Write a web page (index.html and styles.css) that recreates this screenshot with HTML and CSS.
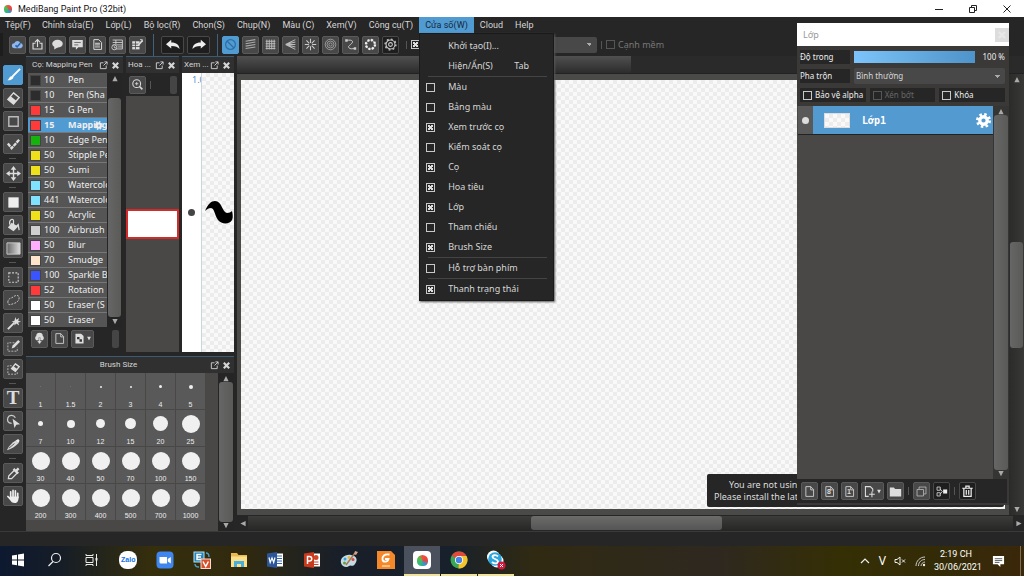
FILE: index.html
```html
<!DOCTYPE html>
<html lang="vi">
<head>
  <meta charset="utf-8">
  <title>MediBang Paint Pro (32bit)</title>
  <link rel="stylesheet" href="styles.css">
</head>
<body>

<svg class="sprite" aria-hidden="true">
  <symbol id="popout" viewBox="0 0 10 10"><path d="M5 2H1.500V8.500H8V5M5 5l4-4M6 1h3v3" fill="none" stroke="currentColor"/></symbol>
  <symbol id="close" viewBox="0 0 10 10"><path d="M2 2l6 6M8 2l-6 6" stroke="currentColor" stroke-width="2.400"/></symbol>
  <symbol id="up" viewBox="0 0 8 8"><path d="M4 1l3 6H1z" fill="currentColor"/></symbol>
  <symbol id="down" viewBox="0 0 8 8"><path d="M4 7l3-6H1z" fill="currentColor"/></symbol>
  <symbol id="left" viewBox="0 0 8 8"><path d="M1 4l6-3v6z" fill="currentColor"/></symbol>
  <symbol id="right" viewBox="0 0 8 8"><path d="M7 4l-6-3v6z" fill="currentColor"/></symbol>
  <symbol id="page" viewBox="0 0 16 16"><path d="M3.500 2h6l3.500 3.500V14h-9.500zM9.500 2v4H13" fill="none" stroke="currentColor"/></symbol>
  <symbol id="gear" viewBox="0 0 16 16"><circle cx="8" cy="8" r="4" fill="none" stroke="currentColor" stroke-width="3.500"/><circle cx="8" cy="8" r="6.500" fill="none" stroke="currentColor" stroke-width="3" stroke-dasharray="2.600 2.500"/></symbol>
</svg>

<header class="titlebar">
  <span class="logo"></span>
  <h1>MediBang Paint Pro (32bit)</h1>
  <div class="window-buttons">
    <button type="button" aria-label="Minimize"><svg viewBox="0 0 10 10"><path d="M1 5.500h8" stroke="#222"/></svg></button>
    <button type="button" aria-label="Restore"><svg viewBox="0 0 10 10"><path d="M1.500 3.500h5v5h-5zM3.500 3.500v-2h5v5h-2" fill="none" stroke="#222"/></svg></button>
    <button type="button" aria-label="Close"><svg viewBox="0 0 10 10"><path d="M1.500 1.500l7 7M8.500 1.500l-7 7" stroke="#222"/></svg></button>
  </div>
</header>

<nav class="menubar">
  <button type="button">Tệp(F)</button>
  <button type="button">Chỉnh sửa(E)</button>
  <button type="button">Lớp(L)</button>
  <button type="button">Bộ lọc(R)</button>
  <button type="button">Chọn(S)</button>
  <button type="button">Chụp(N)</button>
  <button type="button">Màu (C)</button>
  <button type="button">Xem(V)</button>
  <button type="button">Công cụ(T)</button>
  <div class="menu-open">
    <button type="button" class="active">Cửa số(W)</button>
    <div class="dropdown">
      <button type="button" class="item">Khởi tạo(I)...</button>
      <button type="button" class="item">Hiện/Ẩn(S)<kbd>Tab</kbd></button>
      <hr>
      <label class="item"><input type="checkbox">Màu</label>
      <label class="item"><input type="checkbox">Bảng màu</label>
      <label class="item"><input type="checkbox" checked>Xem trước cọ</label>
      <label class="item"><input type="checkbox">Kiểm soát cọ</label>
      <label class="item"><input type="checkbox" checked>Cọ</label>
      <label class="item"><input type="checkbox" checked>Hoa tiêu</label>
      <label class="item"><input type="checkbox" checked>Lớp</label>
      <label class="item"><input type="checkbox">Tham chiếu</label>
      <label class="item"><input type="checkbox" checked>Brush Size</label>
      <hr>
      <label class="item"><input type="checkbox">Hỗ trợ bàn phím</label>
      <hr>
      <label class="item"><input type="checkbox" checked>Thanh trạng thái</label>
    </div>
  </div>
  <button type="button">Cloud</button>
  <button type="button">Help</button>
</nav>

<div class="toolbar">
  <div class="group">
    <button type="button" class="btn" aria-label="Cloud"><svg viewBox="0 0 16 16"><path d="M4 12.500a3 3 0 0 1 0-6 4 4 0 0 1 7.500-.500 3.300 3.300 0 0 1 .500 6.500z" fill="#8fb8ee"/><path d="M5.500 9l2 2 4-4.500" fill="none" stroke="#2f62a8" stroke-width="2"/></svg></button>
    <button type="button" class="btn" aria-label="Export"><svg viewBox="0 0 16 16"><path d="M5.500 6.500h-3v7h11v-7h-3M8 11V2M5 5l3-3 3 3" fill="none" stroke="#ddd" stroke-width="1.400"/></svg></button>
    <button type="button" class="btn" aria-label="Comment"><svg viewBox="0 0 16 16"><ellipse cx="8" cy="7" rx="6.500" ry="4.800" fill="#ddd"/><path d="M4 10l0 4 5-3z" fill="#ddd"/></svg></button>
    <button type="button" class="btn" aria-label="Message"><svg viewBox="0 0 16 16"><path d="M1.500 2.500h13v9H9l-3 3v-3H1.500z" fill="#ddd"/><path d="M4 5.500h8M4 8.500h5" stroke="#555"/></svg></button>
    <button type="button" class="btn" aria-label="Document"><svg viewBox="0 0 16 16"><path d="M3.500 2h6l3.500 3.500V14h-9.500zM5 6.500h6M5 8.500h6M5 11h6" fill="none" stroke="#ddd" stroke-width="1.200"/></svg></button>
    <button type="button" class="btn" aria-label="History"><svg viewBox="0 0 16 16"><path d="M2 2.500h12v11H6M2 5.500h12M2 8.500h12M6 2.500v5M8 11h6" fill="none" stroke="#ddd"/><circle cx="4" cy="11.500" r="3" fill="#444" stroke="#ddd"/><path d="M4 10v2h2" fill="none" stroke="#ddd"/></svg></button>
    <button type="button" class="btn" aria-label="Edit grid"><svg viewBox="0 0 16 16"><path d="M1.500 4h9v10h-9z" fill="#ddd"/><path d="M1 7.500h10M1 10.500h10M5.500 4v10" stroke="#444"/><path d="M9 9l5-6" stroke="#ddd" stroke-width="2" /><path d="M11 2h3v3" fill="none" stroke="#ddd"/></svg></button>
  </div>
  <i class="bar"></i>
  <div class="group wide">
    <button type="button" class="btn dark" aria-label="Undo"><svg viewBox="0 0 16 16"><path d="M0 7l6-5v3c6 0 9 2.500 9.500 7.500-2-2.500-4.500-3.500-9.500-3.500v3z" fill="#eee"/></svg></button>
    <button type="button" class="btn dark" aria-label="Redo"><svg viewBox="0 0 16 16"><path d="M16 7l-6-5v3C4 5 1 7.500.500 12.500 2.500 10 5 9 10 9v3z" fill="#eee"/></svg></button>
  </div>
  <i class="bar"></i>
  <div class="group">
    <button type="button" class="btn on" aria-label="Snap off"><svg viewBox="0 0 16 16"><circle cx="8" cy="8" r="6" fill="none" stroke="#2b6fa5" stroke-width="1.500"/><path d="M4 4l8 8" stroke="#2b6fa5" stroke-width="1.500"/></svg></button>
    <button type="button" class="btn" aria-label="Parallel snap"><svg viewBox="0 0 16 16"><path d="M2 4l12-2M2 7l12-2M2 10l12-2M2 13l12-2" stroke="#aaa" stroke-width="1.300"/></svg></button>
    <button type="button" class="btn" aria-label="Grid snap"><svg viewBox="0 0 16 16"><path d="M3.500 2v12M6.500 2v12M9.500 2v12M12.500 2v12M2 4h12M2 7h12M2 10h12M2 13h12" stroke="#bbb" stroke-width="1.200"/></svg></button>
    <button type="button" class="btn" aria-label="Vanishing snap"><svg viewBox="0 0 16 16"><path d="M2 8l12-6M2 8l12-3M2 8h12M2 8l12 3M2 8l12 6" stroke="#bbb" stroke-width="1.300"/></svg></button>
    <button type="button" class="btn" aria-label="Radial snap"><svg viewBox="0 0 16 16"><path d="M8 1v5M8 10v5M1 8h5M10 8h5M3 3l3.500 3.500M9.500 9.500L13 13M13 3L9.500 6.500M6.500 9.500L3 13" stroke="#ccc" stroke-width="1.300"/></svg></button>
    <button type="button" class="btn" aria-label="Circle snap"><svg viewBox="0 0 16 16"><g fill="none" stroke="#aaa"><circle cx="8" cy="8" r="6.500"/><circle cx="8" cy="8" r="4.300"/><circle cx="8" cy="8" r="2"/></g></svg></button>
    <button type="button" class="btn" aria-label="Curve snap"><svg viewBox="0 0 16 16"><path d="M3 3c5-1 9 0 7 3s-6 4-4 6 4 1 7 1" fill="none" stroke="#ccc" stroke-width="1.200"/><path d="M1.500 1.500h3v3h-3zM12 11.500h3v3h-3z" fill="#ccc"/></svg></button>
    <button type="button" class="btn" aria-label="Ellipse snap"><svg viewBox="0 0 16 16"><circle cx="8" cy="8" r="5.500" fill="none" stroke="#ddd"/><circle cx="8" cy="8" r="5.500" fill="none" stroke="#eee" stroke-width="3" stroke-dasharray="2.300 2.020"/></svg></button>
    <button type="button" class="btn dark" aria-label="Snap settings"><svg viewBox="0 0 16 16"><g fill="none" stroke="#ccc"><circle cx="8" cy="8" r="5.500" stroke-width="1.300"/><circle cx="8" cy="8" r="2.300" stroke-width="1.300"/><circle cx="8" cy="8" r="6.700" stroke-dasharray="2.300 2.900" stroke-width="1.600"/></g></svg></button>
  </div>
  <i class="bar short"></i>
  <input type="checkbox" checked aria-label="AntiAliasing">
  <select class="combo" aria-label="Correction"><option></option></select>
  <i class="bar short"></i>
  <label class="soft"><input type="checkbox" disabled>Cạnh mềm</label>
</div>

<main class="workspace">
  <aside class="tools">
    <button type="button" class="btn on" aria-label="Brush"><svg viewBox="0 0 16 16"><path d="M15 1L7 9" stroke="#fff" stroke-width="2"/><path d="M7.500 8.500c1.500 2-1 5-6 4.500 2-1 2-5 6-4.500z" fill="#fff"/></svg></button>
    <button type="button" class="btn" aria-label="Eraser"><svg viewBox="0 0 16 16"><path d="M8 2l6 5-6 7-6-5z" fill="none" stroke="#ddd" stroke-width="1.500"/><path d="M5 5.500L2 9l6 5 3-3.500z" fill="#ddd"/></svg></button>
    <button type="button" class="btn" aria-label="Shape"><svg viewBox="0 0 16 16"><path d="M3 3h10v10H3z" fill="none" stroke="#bbb" stroke-width="1.500"/></svg></button>
    <button type="button" class="btn" aria-label="Dot"><svg viewBox="0 0 16 16"><path d="M2 7l4 5 8-9" fill="none" stroke="#ddd" stroke-width="2.500" stroke-dasharray="4 .800"/></svg></button>
    <hr>
    <button type="button" class="btn" aria-label="Move"><svg viewBox="0 0 16 16"><path d="M8 3v10M3 8h10" stroke="#ddd" stroke-width="1.500"/><path d="M8 0l3 4H5zM8 16l3-4H5zM0 8l4-3v6zM16 8l-4-3v6z" fill="#ddd"/></svg></button>
    <hr>
    <button type="button" class="btn" aria-label="Fill"><svg viewBox="0 0 16 16"><path d="M2.500 2.500h11v11h-11z" fill="#eee"/></svg></button>
    <button type="button" class="btn" aria-label="Bucket"><svg viewBox="0 0 16 16"><path d="M6 5l7 4-5 5-6-4z" fill="#ddd"/><path d="M4 7c-1-6 4-7 4-4v5M11 9l2-2 1 6" fill="none" stroke="#ddd" stroke-width="1.300"/></svg></button>
    <button type="button" class="btn" aria-label="Gradient"><svg viewBox="0 0 16 16"><defs><linearGradient id="ramp"><stop offset="0" stop-color="#666"/><stop offset="1" stop-color="#ddd"/></linearGradient></defs><path d="M1 2h14v12H1z" fill="url(#ramp)" stroke="#ccc"/></svg></button>
    <hr>
    <button type="button" class="btn" aria-label="Select"><svg viewBox="0 0 16 16"><path d="M3 3h10v10H3z" fill="none" stroke="#ccc" stroke-width="1.200" stroke-dasharray="2 1.500"/></svg></button>
    <button type="button" class="btn" aria-label="Lasso"><svg viewBox="0 0 16 16"><path d="M2 10c0-5 4-4 6-6s6-2 6 1-2 5-5 6-7 3-7-1z" fill="none" stroke="#ccc" stroke-dasharray="2 1.300"/></svg></button>
    <button type="button" class="btn" aria-label="Magic wand"><svg viewBox="0 0 16 16"><path d="M2 14l7-7" stroke="#ddd" stroke-width="2"/><path d="M10 1l1 3 3-2-1 3 3 1-3 1 1 3-3-2-2 2V7L6 6l3-1z" fill="#ddd"/></svg></button>
    <button type="button" class="btn" aria-label="Select pen"><svg viewBox="0 0 16 16"><path d="M9 4H2v9h10V9" fill="none" stroke="#bbb" stroke-dasharray="2 1.300"/><path d="M6 10l1-3 6-6 2 2-6 6z" fill="#ddd"/></svg></button>
    <button type="button" class="btn" aria-label="Select eraser"><svg viewBox="0 0 16 16"><path d="M6 4H2v9h10v-3" fill="none" stroke="#bbb" stroke-dasharray="2 1.300"/><path d="M10 2l4 3-4 5-4-3z" fill="none" stroke="#ddd" stroke-width="1.500"/><path d="M8 4.500L6 7l4 3 2-2.500z" fill="#ddd"/></svg></button>
    <hr>
    <button type="button" class="btn letter" aria-label="Text">T</button>
    <button type="button" class="btn" aria-label="Operation"><svg viewBox="0 0 16 16"><path d="M6 10c-4 0-5-3-4-6s6-4 8 0" fill="none" stroke="#ccc" stroke-width="1.300"/><path d="M7 5l8 6-4 .500L9 15z" fill="#ddd"/></svg></button>
    <button type="button" class="btn" aria-label="Divide"><svg viewBox="0 0 16 16"><path d="M1 14c2-5 6-8 9-10l3 3c-3 3-7 6-12 7z" fill="#ddd"/><path d="M10 4l3-2 1.500 2L13 7z" fill="#eee"/><path d="M3 12l6-5" stroke="#555"/></svg></button>
    <hr>
    <button type="button" class="btn" aria-label="Eyedropper"><svg viewBox="0 0 16 16"><path d="M2.500 13.500l.500-3 6-6 3 3-6 6z" fill="none" stroke="#ddd" stroke-width="1.300"/><path d="M8 3l5 5M11 5l2.500-2.500" stroke="#ddd" stroke-width="2.500"/></svg></button>
    <button type="button" class="btn" aria-label="Hand"><svg viewBox="0 0 16 16"><path d="M5 9V3M7.500 8V1.500M10 8V2M12.500 9V4.500M5 11L2 8" stroke="#eee" stroke-width="1.800" stroke-linecap="round"/><path d="M4 8h9.500c0 4-1 7-4 7s-4-1-5.500-4z" fill="#eee"/></svg></button>
  </aside>

  <div class="docks">
    <div class="dock-row">
      <section class="panel brushes">
        <header><h2>Cọ: Mapping Pen</h2><svg><use href="#popout"/></svg><svg><use href="#close"/></svg></header>
        <div class="scroll-pane">
          <ul class="brush-list">
            <li><i class="c-dark"></i><b>10</b><span>Pen</span></li>
            <li><i class="c-dark"></i><b>10</b><span>Pen (Sha</span></li>
            <li><i class="c-red"></i><b>15</b><span>G Pen</span></li>
            <li class="selected"><i class="c-red"></i><b>15</b><span>Mapping</span><svg><use href="#gear"/></svg></li>
            <li><i class="c-green"></i><b>10</b><span>Edge Pen</span></li>
            <li><i class="c-yellow"></i><b>50</b><span>Stipple Pe</span></li>
            <li><i class="c-yellow"></i><b>50</b><span>Sumi</span></li>
            <li><i class="c-cyan"></i><b>50</b><span>Watercolo</span></li>
            <li><i class="c-cyan"></i><b>441</b><span>Watercolo</span></li>
            <li><i class="c-yellow"></i><b>50</b><span>Acrylic</span></li>
            <li><i class="c-gray"></i><b>100</b><span>Airbrush</span></li>
            <li><i class="c-pink"></i><b>50</b><span>Blur</span></li>
            <li><i class="c-peach"></i><b>70</b><span>Smudge</span></li>
            <li><i class="c-blue"></i><b>100</b><span>Sparkle B</span></li>
            <li><i class="c-red"></i><b>52</b><span>Rotation</span></li>
            <li><i class="c-white"></i><b>50</b><span>Eraser (S</span></li>
            <li><i class="c-white"></i><b>50</b><span>Eraser</span></li>
          </ul>
          <div class="vscroll brush-scroll"><svg><use href="#up"/></svg><i></i><svg><use href="#down"/></svg></div>
        </div>
        <footer>
          <button type="button" class="btn" aria-label="Cloud brush"><svg viewBox="0 0 16 16"><path d="M4 10a3 3 0 0 1 0-5 4 4 0 0 1 8 0 3 3 0 0 1 0 5z" fill="#ddd"/><path d="M8 15l-3-4h2V7h2v4h2z" fill="#ddd" stroke="#555" stroke-width=".500"/></svg></button>
          <button type="button" class="btn" aria-label="New brush"><svg><use href="#page"/></svg></button>
          <button type="button" class="btn more" aria-label="Add brush"><svg viewBox="0 0 16 16"><path d="M3 2h7l3 3v9H3z" fill="#ddd"/><path d="M5 6h3v3H5zM8 9h3v3H8z" fill="#333"/></svg><svg class="tiny"><use href="#down"/></svg></button>
          <i class="grip"></i>
        </footer>
      </section>

      <section class="panel navigator">
        <header><h2>Hoa ...</h2><svg><use href="#popout"/></svg><svg><use href="#close"/></svg></header>
        <div class="nav-tools">
          <button type="button" class="btn" aria-label="Zoom"><svg viewBox="0 0 16 16"><circle cx="7" cy="7" r="4.800" fill="none" stroke="#ddd" stroke-width="1.300"/><path d="M10.500 10.500L14 14" stroke="#ddd" stroke-width="2"/><path d="M5 7h4M7 5v4" stroke="#ddd"/></svg></button>
          <i class="bar short"></i>
          <i class="grip"></i>
        </div>
        <div class="nav-body"><div class="nav-view"></div></div>
      </section>

      <section class="panel preview">
        <header><h2>Xem ...</h2><svg><use href="#popout"/></svg><svg><use href="#close"/></svg></header>
        <div class="preview-body">
          <div class="dot-view"><span>1.0</span><i></i></div>
          <div class="stroke-view checker"><svg viewBox="0 0 32 26"><path d="M3 11C6 4 9 1 13 1c7 0 7 11 12 12 2 0 4-1 5-2 1 4 1 7 0 9-2 4-10 5-14 0-4-6-3-11-7-12-2 0-4 1-6 3z"/></svg></div>
        </div>
      </section>
    </div>

    <section class="panel sizes">
      <header><h2>Brush Size</h2><svg><use href="#popout"/></svg><svg><use href="#close"/></svg></header>
      <div class="scroll-pane">
        <div class="size-grid">
          <button type="button"><i class="s1 faint"></i>1</button>
          <button type="button"><i class="s1 faint"></i>1.5</button>
          <button type="button"><i class="s2"></i>2</button>
          <button type="button"><i class="s2"></i>3</button>
          <button type="button"><i class="s3"></i>4</button>
          <button type="button"><i class="s4"></i>5</button>
          <button type="button"><i class="s5"></i>7</button>
          <button type="button"><i class="s8"></i>10</button>
          <button type="button"><i class="s9"></i>12</button>
          <button type="button"><i class="s11"></i>15</button>
          <button type="button"><i class="s15"></i>20</button>
          <button type="button"><i></i>25</button>
          <button type="button"><i></i>30</button>
          <button type="button"><i></i>40</button>
          <button type="button"><i></i>50</button>
          <button type="button"><i></i>70</button>
          <button type="button"><i></i>100</button>
          <button type="button"><i></i>150</button>
          <button type="button"><i></i>200</button>
          <button type="button"><i></i>300</button>
          <button type="button"><i></i>400</button>
          <button type="button"><i></i>500</button>
          <button type="button"><i></i>700</button>
          <button type="button"><i></i>1000</button>
        </div>
        <div class="vscroll size-scroll"><svg><use href="#up"/></svg><i></i><svg><use href="#down"/></svg></div>
      </div>
    </section>
  </div>

  <section class="document">
    <div class="tabs"><div class="tab"></div></div>
    <div class="canvas-row">
      <div class="canvas checker">
        <div class="notice"><p>You are not using</p><p>Please install the lat</p></div>
      </div>
      <div class="vscroll canvas-scroll"><svg><use href="#up"/></svg><i></i><svg><use href="#down"/></svg></div>
    </div>
    <div class="hscroll"><svg><use href="#left"/></svg><div class="track"><i></i></div><svg><use href="#right"/></svg></div>
  </section>
</main>

<div class="statusbar"></div>

<section class="layers">
  <header><h2>Lớp</h2><button type="button" aria-label="Close"><svg><use href="#close"/></svg></button></header>
  <div class="layer-row">
    <label for="opacity">Độ trong</label>
    <input type="range" id="opacity" min="0" max="100" value="100">
    <output for="opacity">100 %</output>
  </div>
  <div class="layer-row">
    <label for="blend">Pha trộn</label>
    <select id="blend"><option>Bình thường</option></select>
  </div>
  <div class="layer-row flags">
    <label><input type="checkbox">Bảo vệ alpha</label>
    <label class="off"><input type="checkbox" disabled>Xén bớt</label>
    <label><input type="checkbox">Khóa</label>
  </div>
  <div class="scroll-pane layer-pane">
    <ul>
      <li>
        <span class="eye"><i></i></span>
        <span class="thumb checker"></span>
        <strong>Lớp1</strong>
        <svg><use href="#gear"/></svg>
      </li>
    </ul>
    <div class="vscroll layer-scroll"><svg><use href="#up"/></svg><i></i><svg><use href="#down"/></svg></div>
  </div>
  <footer>
    <button type="button" class="btn" aria-label="New layer"><svg><use href="#page"/></svg></button>
    <button type="button" class="btn num" aria-label="New 8bit layer"><svg><use href="#page"/></svg><b>8</b></button>
    <button type="button" class="btn num" aria-label="New 1bit layer"><svg><use href="#page"/></svg><b>1</b></button>
    <button type="button" class="btn more" aria-label="Add layer"><svg viewBox="0 0 16 16"><path d="M7 14H3V2h6l3 3v3M11 8v7M7.500 11.500h7" fill="none" stroke="#ddd" stroke-width="1.300"/></svg><svg class="tiny"><use href="#down"/></svg></button>
    <button type="button" class="btn" aria-label="New folder"><svg viewBox="0 0 16 16"><path d="M1 3h5l1.500 2H15v9H1z" fill="#ddd"/></svg></button>
    <i class="bar short"></i>
    <button type="button" class="btn" aria-label="Duplicate"><svg viewBox="0 0 16 16"><path d="M2.500 5.500h8v8h-8zM5 5V2.500h8.500V11H11" fill="none" stroke="#bbb"/></svg></button>
    <button type="button" class="btn dark" aria-label="Merge"><svg viewBox="0 0 16 16"><path d="M2.500 2.500h4v4h-4zM2.500 9.500h4v4h-4z" fill="none" stroke="#ddd"/><path d="M10 5.500h5v5h-5z" fill="#eee"/><path d="M6 4.500l3 3.500-3 3.500" fill="none" stroke="#ddd"/></svg></button>
    <i class="bar short"></i>
    <button type="button" class="btn dark" aria-label="Delete"><svg viewBox="0 0 16 16"><path d="M1.500 4h13M6 3.500v-2h4v2M3.500 4v10h9V4M6.500 6v6M9.500 6v6" fill="none" stroke="#eee" stroke-width="1.500"/></svg></button>
  </footer>
</section>

<footer class="taskbar">
  <div class="apps">
    <button type="button" aria-label="Start"><svg viewBox="0 0 20 20"><path d="M4 5.500l5-.800v4.800H4zM10 4.500l6-.900v5.900h-6zM4 10.500h5v4.800l-5-.800zM10 10.500h6v5.900l-6-.900z" fill="#fff"/></svg></button>
    <button type="button" aria-label="Search"><svg viewBox="0 0 20 20"><circle cx="11" cy="8" r="4.500" fill="none" stroke="#eee" stroke-width="1.200"/><path d="M8 11.500L3.500 16" stroke="#eee" stroke-width="1.300"/></svg></button>
    <button type="button" aria-label="Task view"><svg viewBox="0 0 20 20"><path d="M4 7.500h7v5H4zM4 4v1.500h7V4M4 16v-1.500h7V16M14.500 4v12" fill="none" stroke="#eee"/><path d="M13.500 8h2v2.500h-2z" fill="#eee"/></svg></button>
    <button type="button" aria-label="Zalo"><span class="zalo">Zalo</span></button>
    <button type="button" aria-label="Zoom"><svg viewBox="0 0 20 20"><rect x="1.500" y="1.500" width="17" height="17" rx="4" fill="#3f87ee"/><path d="M4.500 7h7.500v6.500H6A1.500 1.500 0 0 1 4.500 12zM12.800 9l3-2v6.500l-3-2z" fill="#fff"/></svg></button>
    <button type="button" aria-label="EVKey"><svg viewBox="0 0 20 20"><rect x="2" y="2" width="10" height="10" fill="#2283b8" stroke="#b9def0"/><path d="M9.500 4.500H5v5h4.500M5 7h4" fill="none" stroke="#fff" stroke-width="1.500"/><rect x="9" y="9" width="9.500" height="9.500" fill="#d6512e" stroke="#f7d9cd"/><path d="M11 11.500l2.700 5 2.700-5" fill="none" stroke="#fff" stroke-width="1.500"/><path d="M14 3c3 0 3 2 3 4M3 14c0 3 2 3 4 3" fill="none" stroke="#4aa3cf" stroke-width="1.300"/></svg></button>
    <button type="button" aria-label="Explorer"><svg viewBox="0 0 20 20"><path d="M2 3h6l1.500 2H18v12H2z" fill="#e9bb4c"/><path d="M2 6.500h16V17H2z" fill="#fbe08c"/><path d="M5 17v-6h10v6h-3v-3H8v3z" fill="#4aaedb"/></svg></button>
    <button type="button" aria-label="Word"><svg viewBox="0 0 20 20"><path d="M10 3.500h8v13h-8z" fill="#fff"/><path d="M11 6h6M11 8.500h6M11 11h6M11 13.500h6" stroke="#3766ae"/><path d="M2 3.500L12 2v16L2 16.500z" fill="#2b569a"/><path d="M4 7.500l1.200 5L7 8l1.700 4.500 1.300-5" fill="none" stroke="#fff" stroke-width="1.200"/></svg></button>
    <button type="button" aria-label="PowerPoint"><svg viewBox="0 0 20 20"><path d="M10 3.500h8v13h-8z" fill="#fff"/><path d="M11.500 12h5M11.500 14.500h5" stroke="#d04525"/><circle cx="14" cy="7.500" r="2.500" fill="#d04525"/><path d="M2 3.500L12 2v16L2 16.500z" fill="#c8391d"/><path d="M5.500 14V6.500h2a2 2 0 0 1 0 4.500h-2" fill="none" stroke="#fff" stroke-width="1.500"/></svg></button>
    <button type="button" aria-label="Paint"><svg viewBox="0 0 20 20"><path d="M2 13c-1-5 4-9 10-8s7 5 4 9-4 0-6 2-7 1-8-3z" fill="#c4dbe6"/><circle cx="6" cy="9" r="1.500" fill="#39a0d8"/><circle cx="10" cy="7.500" r="1.500" fill="#e5b93c"/><circle cx="5.500" cy="13" r="1.500" fill="#6d9b3f"/><circle cx="14" cy="9.500" r="1.500" fill="#d44a3c"/><path d="M7 15L16 3" stroke="#a4774f" stroke-width="1.400"/><path d="M15 4l1-3 3 1-2 3z" fill="#d3a486"/></svg></button>
    <button type="button" aria-label="Foxit"><svg viewBox="0 0 20 20"><path d="M1 1h14l4 4v14H1z" fill="#f5892a"/><path d="M13.500 4.500c-5-1-7.500 2-7 5s5 3 6-.500H9" fill="none" stroke="#fff" stroke-width="1.800"/><path d="M6 16h8" stroke="#fbd2a5" stroke-width="1.500"/></svg></button>
    <button type="button" class="current open" aria-label="MediBang"><span class="medi"><i class="logo"></i></span></button>
    <button type="button" class="open" aria-label="Chrome"><svg viewBox="0 0 20 20"><circle cx="10" cy="10" r="8.500" fill="#3aa757"/><path d="M10 10L2.600 5.800A8.500 8.500 0 0 1 17.400 5.800z" fill="#e04a3a"/><path d="M10 10V6h7.500A8.500 8.500 0 0 1 9.500 18.500z" fill="#f5c32c"/><circle cx="10" cy="10" r="4" fill="#fff"/><circle cx="10" cy="10" r="3.200" fill="#4482ea"/></svg></button>
    <button type="button" class="open" aria-label="Skype"><svg viewBox="0 0 20 20"><circle cx="7.500" cy="7" r="6.500" fill="#fff"/><circle cx="11" cy="11" r="6.500" fill="#fff"/><circle cx="9" cy="9" r="6.800" fill="#2ba6df"/><path d="M12 6.500C10 4.500 6.500 5 6.500 7S12 9 12 11.500 8 14 6 12" fill="none" stroke="#fff" stroke-width="1.800"/><circle cx="15.500" cy="15.500" r="4" fill="#d5173b"/><path d="M14 14l3 3M17 14l-3 3" stroke="#fff"/></svg></button>
  </div>
  <div class="tray">
    <svg viewBox="0 0 12 12"><path d="M2 8l4-4 4 4" fill="none" stroke="#eee" stroke-width="1.200"/></svg>
    <span class="lang">V</span>
    <svg viewBox="0 0 12 12"><path d="M1 4.500h2L6 2v8L3 7.500H1zM8 4.500l3 3M11 4.500l-3 3" fill="none" stroke="#eee"/></svg>
    <svg viewBox="0 0 12 12"><path d="M2 11C2 6 6 2 11 2M4.500 11c0-4 3-6.500 6.500-6.500M7 11c0-2 2-4 4-4" fill="none" stroke="#ccc"/><circle cx="10" cy="10" r="1.200" fill="#eee"/></svg>
    <time>2:19 CH<br>30/06/2021</time>
    <svg class="notify" viewBox="0 0 14 14"><path d="M1 1h12v9H9v3l-3-3H1z" fill="#fff"/><path d="M3 4h8M3 6h8M3 8h5" stroke="#555"/></svg>
  </div>
</footer>

</body>
</html>
```
FILE: styles.css
```css
* {
  box-sizing: border-box;
}

body {
  margin: 0;
  height: 100vh;
  position: relative;
  display: flex;
  flex-direction: column;
  overflow: hidden;
  background: #262626;
  color: #d6d6d6;
  font-family: "Noto Sans", "Open Sans", sans-serif;
  font-size: 9px;
  line-height: 12px;
}

button,
select,
input {
  margin: 0;
  padding: 0;
  border: 0;
  background: none;
  color: inherit;
  font: inherit;
}

h1, h2, p, ul {
  margin: 0;
  padding: 0;
  font-size: inherit;
  font-weight: normal;
  list-style: none;
}

svg {
  display: block;
  flex: none;
}

.sprite {
  position: absolute;
  width: 0;
  height: 0;
}

/* check boxes */
input[type="checkbox"] {
  appearance: none;
  flex: none;
  width: 9px;
  height: 9px;
  border: 1px solid #c8c8c8;
}

input[type="checkbox"]:checked {
  background:
    linear-gradient(45deg, transparent 35%, #ddd 35%, #ddd 65%, transparent 65%) center / 5px 5px no-repeat,
    linear-gradient(-45deg, transparent 35%, #ddd 35%, #ddd 65%, transparent 65%) center / 5px 5px no-repeat;
}

input[type="checkbox"]:disabled {
  border-color: #555;
}

/* title bar */
.titlebar {
  flex: none;
  display: flex;
  align-items: center;
  height: 17px;
  padding-left: 4px;
  background: #fff;
  color: #111;
  font-family: Roboto, sans-serif;
}

.logo {
  width: 8px;
  height: 8px;
  margin-right: 6px;
  border-radius: 60% 60% 50% 50%;
  background: conic-gradient(#f0523c, #e8443a 25%, #3b8ed0 40%, #2fb48c 55%, #54c04a 85%, #f0523c);
}

.window-buttons {
  display: flex;
  margin-left: auto;
}

.window-buttons button {
  width: 34px;
  display: flex;
  justify-content: center;
}

.window-buttons svg {
  width: 10px;
  height: 10px;
}

/* menus */
.menubar {
  flex: none;
  display: flex;
  height: 16px;
}

.menubar > button,
.menu-open > button {
  height: 16px;
  padding: 0 6px;
  font-family: Roboto, sans-serif;
}

.menubar > button:first-child {
  padding: 0 5px;
}

.menu-open {
  position: relative;
}

.menu-open .active {
  background: #519bd3;
  color: #14283a;
}

.dropdown {
  position: absolute;
  top: 16px;
  left: 0;
  z-index: 5;
  width: 135px;
  padding: 2px 0 1px;
  background: #262626;
  border: 1px solid #1a1a1a;
  box-shadow: 1px 1px 2px #555;
}

.dropdown .item {
  position: relative;
  display: flex;
  align-items: center;
  width: 100%;
  height: 20px;
  padding-left: 28px;
}

.dropdown input {
  position: absolute;
  left: 6px;
}

.dropdown kbd {
  position: absolute;
  left: 94px;
  font: inherit;
}

.dropdown hr {
  height: 1px;
  margin: 0 6px 0 8px;
  border: 0;
  background: #444;
}

/* icon buttons */
.btn {
  flex: none;
  display: flex;
  align-items: center;
  justify-content: center;
  width: 17px;
  height: 18px;
  border: 1px solid #5a5a5a;
  border-radius: 2px;
  background: #484848;
  color: #ddd;
}

.btn svg {
  width: 13px;
  height: 13px;
}

.btn.dark {
  background: #1e1e1e;
  border-color: #484848;
}

.btn.on {
  background: #519bd3;
  border-color: #519bd3;
}

.btn.more {
  width: 23px;
}

.btn .tiny {
  width: 6px;
  height: 5px;
}

.bar {
  flex: none;
  width: 1px;
  height: 22px;
  background: #41627f;
}

.bar.short {
  height: 8px;
  background: #555;
}

.grip {
  width: 7px;
  height: 18px;
  border-radius: 2px;
  background: #454545;
}

/* toolbar */
.toolbar {
  flex: none;
  display: flex;
  align-items: center;
  gap: 4px;
  height: 23px;
  padding-left: 6px;
  border-left: 3px solid #1d1d1d;
}

.group {
  display: flex;
  gap: 3px;
  padding-right: 3px;
}

.group.wide {
  padding-left: 3px;
}

.group.wide .btn {
  width: 23px;
}

.group.wide svg {
  width: 16px;
  height: 14px;
}

.combo,
.layer-row select {
  appearance: none;
  height: 16px;
  padding-left: 2px;
  border-radius: 2px;
  background: conic-gradient(from -45deg at 50% 100%, #aaa 90deg, transparent 0) right 5px center / 6px 3px no-repeat #484848;
}

.combo {
  width: 173px;
}

.soft {
  display: flex;
  align-items: center;
  gap: 3px;
  color: #777;
}

/* workspace */
.workspace {
  flex: 1;
  min-height: 0;
  display: flex;
}

.tools {
  flex: none;
  width: 26px;
  padding-top: 9px;
  padding-left: 3px;
  display: flex;
  flex-direction: column;
  gap: 3px;
}

.tools .btn {
  width: 20px;
  height: 20px;
}

.tools .btn svg {
  width: 15px;
  height: 15px;
}

.tools hr {
  width: 7px;
  height: 1px;
  margin: 1px 6px;
  border: 0;
  background: #555;
}

.tools .letter {
  font: bold 19px "Liberation Serif", serif;
}

.docks {
  flex: none;
  display: flex;
  flex-direction: column;
  gap: 4px;
  width: 208px;
}

.dock-row {
  flex: 1;
  min-height: 0;
  display: flex;
  gap: 3px;
}

.panel {
  display: flex;
  flex-direction: column;
  border-top: 1px solid #3d5a73;
}

.panel > header {
  flex: none;
  display: flex;
  align-items: center;
  gap: 3px;
  height: 16px;
  padding: 0 3px 0 2px;
  background: #303030;
  font-family: Roboto, sans-serif;
  font-size: 8px;
}

.panel > header h2 {
  flex: 1;
  min-width: 0;
  white-space: nowrap;
}

.panel > header svg {
  width: 9px;
  height: 9px;
}

.scroll-pane {
  flex: 1;
  min-height: 0;
  display: flex;
}

/* scroll bars */
.vscroll {
  flex: none;
  width: 16px;
  display: flex;
  flex-direction: column;
  align-items: center;
  justify-content: space-between;
  padding: 2px 1px;
  background: #252525;
  color: #aaa;
}

.vscroll svg,
.hscroll svg {
  width: 8px;
  height: 7px;
}

.vscroll i {
  width: 100%;
  border-radius: 3px;
  background: linear-gradient(90deg, #666, #5a5a58);
}

/* brush list */
.brushes {
  flex: none;
  width: 97px;
}

.brushes > header {
  padding-left: 6px;
}

.brush-list {
  flex: 1;
  min-width: 0;
  margin-left: 2px;
  overflow: hidden;
}

.brush-list li {
  position: relative;
  display: flex;
  align-items: center;
  height: 15px;
  padding-left: 2px;
  border-bottom: 1px solid #777;
  background: #555;
  color: #eee;
  white-space: nowrap;
}

.brush-list i {
  flex: none;
  width: 11px;
  height: 11px;
  border: 1px solid #444;
}

.brush-list b {
  flex: none;
  width: 27px;
  padding-left: 3px;
  font-weight: normal;
}

.brush-list .selected,
.brush-list .selected b {
  font-weight: bold;
}

.brush-list .selected {
  background: #519bd3;
}

.brush-list svg {
  position: absolute;
  right: 4px;
  width: 9px;
  height: 9px;
}

.c-dark { background: #2c2c2c; }
.c-red { background: #ff3a3a; }
.c-green { background: #14b40c; }
.c-yellow { background: #efe01c; }
.c-cyan { background: #7fe3ff; }
.c-gray { background: #cfcfcf; }
.c-pink { background: #ffaeff; }
.c-peach { background: #ffe3cb; }
.c-blue { background: #3a55ff; }
.c-white { background: #fff; }

.brush-scroll i {
  flex: 1;
  margin: 16px 0 1px;
}

.brushes .vscroll {
  width: 15px;
  margin-right: 1px;
}

.brushes footer {
  flex: none;
  display: flex;
  align-items: center;
  gap: 3px;
  height: 25px;
  padding: 0 4px 2px 5px;
}

.brushes .grip {
  margin-left: auto;
}

/* navigator */
.navigator {
  flex: none;
  width: 53px;
}

.nav-tools {
  flex: none;
  display: flex;
  align-items: center;
  gap: 4px;
  height: 23px;
  padding: 0 2px 0 3px;
}

.nav-tools .grip {
  margin-left: auto;
}

.nav-body {
  flex: 1;
  display: flex;
  align-items: center;
  background: #4a4846;
}

.nav-view {
  flex: 1;
  height: 30px;
  border: 2px solid #d42a2a;
  background: #fff;
}

/* brush preview */
.preview {
  flex: 1;
  min-width: 0;
}

.preview-body {
  flex: 1;
  display: flex;
}

.dot-view {
  position: relative;
  width: 20px;
  display: flex;
  align-items: center;
  justify-content: center;
  overflow: hidden;
  border-right: 1px solid #c9d6e0;
  background: #fff;
}

.dot-view span {
  position: absolute;
  top: 1px;
  left: 10px;
  color: #4f96cc;
}

.dot-view i {
  width: 7px;
  height: 7px;
  border-radius: 50%;
  background: #444;
}

.checker {
  background: repeating-conic-gradient(#ececec 0 25%, #f9f9f9 0 50%) 0 0 / 8px 8px;
}

.stroke-view {
  flex: 1;
  display: flex;
  align-items: center;
}

.stroke-view svg {
  width: 100%;
  height: 26px;
}

/* brush sizes */
.sizes {
  flex: none;
  height: 175px;
}

.sizes > header h2 {
  padding-left: 2px;
  text-align: center;
}

.sizes .scroll-pane {
  background: #4a4846;
}

.size-grid {
  flex: 1;
  display: grid;
  grid-template-columns: repeat(6, 29px);
  grid-auto-rows: 36px;
  align-content: start;
  gap: 1px;
}

.size-grid button {
  display: flex;
  flex-direction: column;
  align-items: center;
  background: #595959;
  color: #eee;
  font: 7px/9px "Liberation Sans", sans-serif;
}

.size-grid i {
  width: 18px;
  height: 18px;
  margin: auto;
  border-radius: 50%;
  background: #f0f0f0;
}

.size-grid .s1 { width: 1px; height: 1px; }
.size-grid .s2 { width: 2px; height: 2px; }
.size-grid .s3 { width: 3px; height: 3px; }
.size-grid .s4 { width: 4px; height: 4px; }
.size-grid .s5 { width: 5px; height: 5px; }
.size-grid .s8 { width: 8px; height: 8px; }
.size-grid .s9 { width: 9px; height: 9px; }
.size-grid .s11 { width: 11px; height: 11px; }
.size-grid .s15 { width: 15px; height: 15px; }
.size-grid .faint { background: #777; }

.size-scroll i {
  flex: 1;
}

/* document */
.document {
  flex: 1;
  min-width: 0;
  display: flex;
  flex-direction: column;
  margin-left: 3px;
  background: #4a4a49;
}

.tabs {
  flex: none;
  height: 18px;
  border-bottom: 1px solid #222;
  background: #2a2a2a;
}

.tab {
  width: 50%;
  height: 17px;
  background: linear-gradient(#505050, #2c2c2c);
}

.canvas-row {
  flex: 1;
  min-height: 0;
  display: flex;
  justify-content: space-between;
  padding-left: 4px;
}

.canvas {
  position: relative;
  flex: 1;
  margin: 6px 4px 6px 0;
}

.notice {
  position: absolute;
  right: 1px;
  bottom: 2px;
  width: 297px;
  padding: 5px 7px 4px;
  border-radius: 2px;
  background: #262626;
  color: #ddd;
}

.notice p:first-child {
  padding-left: 15px;
}

.canvas-scroll {
  width: 15px;
  background: linear-gradient(90deg, #2b2b29, #383836);
}

.canvas-scroll i {
  height: 106px;
}

.hscroll {
  flex: none;
  display: flex;
  align-items: center;
  height: 16px;
  color: #aaa;
  background: #262626;
}

.hscroll svg {
  margin: 0 1px 0 2px;
}

.track {
  flex: 1;
  height: 14px;
  background: linear-gradient(#3c3c3a, #272725);
}

.track i {
  display: block;
  width: 25%;
  height: 14px;
  margin-left: 37%;
  border-radius: 3px;
  background: linear-gradient(#6c6c6a, #555);
}

.statusbar {
  flex: none;
  height: 15px;
  border-top: 1px solid #3a3a3a;
}

/* floating layer window */
.layers {
  position: absolute;
  top: 23px;
  right: 15px;
  bottom: 71px;
  width: 212px;
  display: flex;
  flex-direction: column;
  background: #3a3938;
  font-size: 8px;
}

.layers > header {
  flex: none;
  display: flex;
  align-items: center;
  justify-content: space-between;
  height: 23px;
  margin-bottom: 4px;
  padding-left: 6px;
  background: #fff;
  color: #999;
  font-size: 9px;
}

.layers > header button {
  width: 14px;
  height: 14px;
  background: #ddd;
  color: #e8e8e8;
}

.layers > header button svg {
  width: 14px;
  height: 10px;
}

.layer-row {
  flex: none;
  display: flex;
  align-items: center;
  gap: 4px;
  height: 14px;
  margin: 0 4px 5px 3px;
  line-height: 14px;
}

.layer-row > label {
  width: 50px;
  height: 14px;
  background: #262626;
  color: #eee;
}

.layer-row input[type="range"] {
  appearance: none;
  flex: 1;
  min-width: 0;
  height: 12px;
  background: linear-gradient(90deg, #7cc4fb, #4e93c9);
}

.layer-row input[type="range"]::-webkit-slider-thumb {
  appearance: none;
  width: 0;
}

.layer-row output {
  width: 26px;
  text-align: right;
  color: #eee;
}

.layer-row select {
  flex: 1;
}

.layer-row.flags {
  margin-bottom: 4px;
}

.layer-row.flags > label {
  flex: 1;
  display: flex;
  align-items: center;
  gap: 3px;
  padding-left: 3px;
  white-space: nowrap;
}

.layer-row.flags .off {
  color: #666;
}

.layer-pane ul {
  flex: 1;
  padding-left: 1px;
  background: #4a4846;
}

.layer-pane li {
  display: flex;
  align-items: center;
  height: 29px;
  padding-right: 2px;
  border-bottom: 1px solid #222;
  background: #539ad0;
  color: #fff;
}

.eye {
  display: flex;
  align-items: center;
  justify-content: center;
  align-self: stretch;
  width: 15px;
  margin-right: 11px;
  background: #595959;
}

.eye i {
  width: 7px;
  height: 7px;
  border-radius: 50%;
  background: #ddd;
}

.thumb {
  width: 26px;
  height: 15px;
  border: 1px solid #ddd;
}

.layer-pane strong {
  flex: 1;
  padding-left: 12px;
  font: bold 10px "DejaVu Sans Mono", monospace;
}

.layer-pane li svg {
  width: 15px;
  height: 15px;
}

.layer-scroll {
  background: #353534;
}

.layer-scroll i {
  flex: 1;
}

.layers footer {
  flex: none;
  display: flex;
  align-items: center;
  gap: 3px;
  height: 24px;
  margin: 0 2px 2px 0;
  padding-left: 4px;
  background: #262626;
}

.layers footer .bar {
  margin: 0 1px;
}

.num {
  position: relative;
}

.num b {
  position: absolute;
  top: 4px;
  left: 5px;
  font: bold 7px/9px "Liberation Sans", sans-serif;
}

/* task bar */
.taskbar {
  flex: none;
  display: flex;
  justify-content: space-between;
  height: 30px;
  background: linear-gradient(90deg, #0d1930 0, #161d26 6%, #362f0c 15%, #30290f 24%, #191f29 33%, #17202b 44%, #302a12 52%, #2e2820 70%, #352f05 82%, #332b07 92%, #3b270b 100%);
}

.apps {
  display: flex;
  justify-content: space-between;
  width: 514px;
}

.apps button {
  width: 36px;
  display: flex;
  align-items: center;
  justify-content: center;
  border-bottom: 2px solid transparent;
}

.apps .open {
  border-color: #f2e39a;
}

.apps .current {
  background: #4b515c;
}

.apps svg {
  width: 20px;
  height: 20px;
}

.zalo {
  width: 18px;
  height: 18px;
  border-radius: 8px;
  background: #fff;
  color: #1272e8;
  font: bold 7px/18px "Liberation Sans", sans-serif;
}

.medi {
  display: flex;
  align-items: center;
  justify-content: center;
  width: 18px;
  height: 18px;
  border-radius: 4px;
  background: #fff;
}

.medi .logo {
  width: 11px;
  height: 11px;
  margin: 0;
}

.tray {
  display: flex;
  align-items: center;
  gap: 8px;
  margin-right: 3px;
  padding-right: 15px;
  border-right: 1px solid #7a7154;
  color: #fff;
}

.tray svg {
  width: 12px;
  height: 12px;
}

.lang {
  font-size: 12px;
}

.tray time {
  width: 44px;
  text-align: center;
  font-family: Roboto, sans-serif;
  line-height: 13px;
  white-space: nowrap;
}

.tray .notify {
  width: 13px;
  height: 13px;
  margin-left: 6px;
}
```
